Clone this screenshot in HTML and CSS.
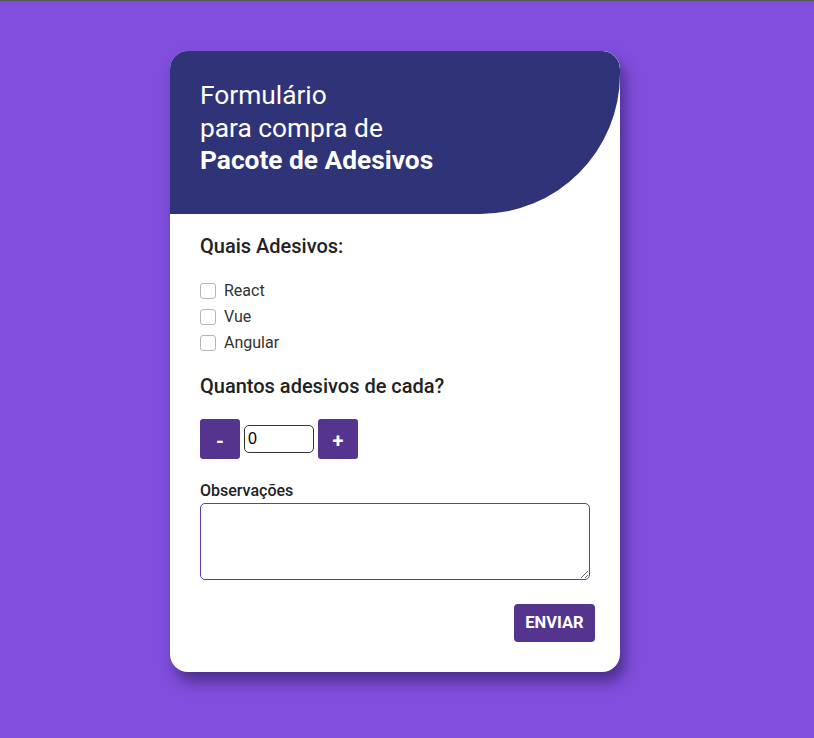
FILE: index.html
```html
<!DOCTYPE html>
<html lang="pt-BR">
<head>
<meta charset="utf-8">
<title>Formulário</title>
<link rel="stylesheet" href="styles.css">
</head>
<body>
<main class="page">
  <form class="card">
    <header class="card-header">
      <h1 class="title">Formulário<br>para compra de<br><strong>Pacote de Adesivos</strong></h1>
    </header>
    <section class="card-body">
      <h2 class="section-title">Quais Adesivos:</h2>
      <div class="options">
        <label class="option"><input type="checkbox" class="check"> React</label>
        <label class="option"><input type="checkbox" class="check"> Vue</label>
        <label class="option"><input type="checkbox" class="check"> Angular</label>
      </div>
      <h2 class="section-title qty-title">Quantos adesivos de cada?</h2>
      <div class="counter">
        <button type="button" class="btn square">-</button>
        <input type="text" class="qty" value="0">
        <button type="button" class="btn square">+</button>
      </div>
      <label class="obs-label" for="obs">Observações</label>
      <textarea id="obs" class="obs"></textarea>
      <div class="actions">
        <button type="submit" class="btn submit">ENVIAR</button>
      </div>
    </section>
  </form>
</main>
</body>
</html>
```
FILE: styles.css
```css
html, body {
  margin: 0;
  padding: 0;
}
body {
  background: #804fdd;
  border-top: 1px solid #575757;
  font-family: Roboto, "Liberation Sans", sans-serif;
  min-height: 737px;
  box-sizing: border-box;
}
.page {
  padding: 50px 0 0 170px;
}
.card {
  width: 450px;
  background: #fff;
  border-radius: 18px;
  box-shadow: 5px 10px 14px rgba(30, 15, 70, 0.5);
  overflow: hidden;
}
.card-header {
  background: #2e3477;
  border-radius: 0 18px 140px 0;
  padding: 28px 30px 37px;
}
.title {
  margin: 0;
  color: #fff;
  font-size: 26.3px;
  line-height: 32.5px;
  font-weight: 400;
}
.title strong {
  font-weight: 700;
}
.card-body {
  padding: 20px 30px 30px;
  display: flex;
  flex-direction: column;
}
.section-title {
  margin: 0;
  font-size: 20px;
  line-height: 25px;
  font-weight: 500;
  color: #222;
}
.options {
  display: flex;
  flex-direction: column;
  margin-top: 19px;
}
.option {
  display: flex;
  align-items: center;
  height: 26px;
  font-size: 16px;
  color: #333;
}
.check {
  appearance: none;
  -webkit-appearance: none;
  width: 16px;
  height: 16px;
  margin: 1px 8px 0 0;
  border: 1px solid #b5b5b5;
  border-radius: 3px;
  background: #fff;
  box-sizing: border-box;
}
.qty-title {
  margin-top: 18px;
}
.counter {
  display: flex;
  align-items: center;
  gap: 4px;
  margin-top: 20px;
}
.btn {
  border: none;
  background: #55348f;
  color: #fff;
  font-family: Roboto, "Liberation Sans", sans-serif;
  font-weight: 700;
  border-radius: 3px;
  cursor: pointer;
}
.square {
  width: 40px;
  height: 40px;
  font-size: 20px;
  padding: 5px 0 0;
}
.qty {
  width: 70px;
  height: 28px;
  box-sizing: border-box;
  border: 1px solid #333;
  border-radius: 5px;
  padding: 0 3px;
  font-family: "Liberation Sans", Arial, sans-serif;
  font-size: 16px;
  color: #000;
}
.obs-label {
  margin-top: 23px;
  font-size: 16px;
  line-height: 18px;
  font-weight: 500;
  color: #222;
}
.obs {
  margin-top: 3.6px;
  width: 390px;
  height: 77.4px;
  box-sizing: border-box;
  border: 1px solid #5b3bb5;
  border-radius: 5px;
  resize: vertical;
  font-family: Roboto, sans-serif;
}
.actions {
  display: flex;
  justify-content: flex-end;
  margin-top: 23.3px;
  margin-right: -5px;
}
.submit {
  width: 81px;
  height: 38px;
  font-size: 16.5px;
  padding: 0;
  border-radius: 4px;
}
```
